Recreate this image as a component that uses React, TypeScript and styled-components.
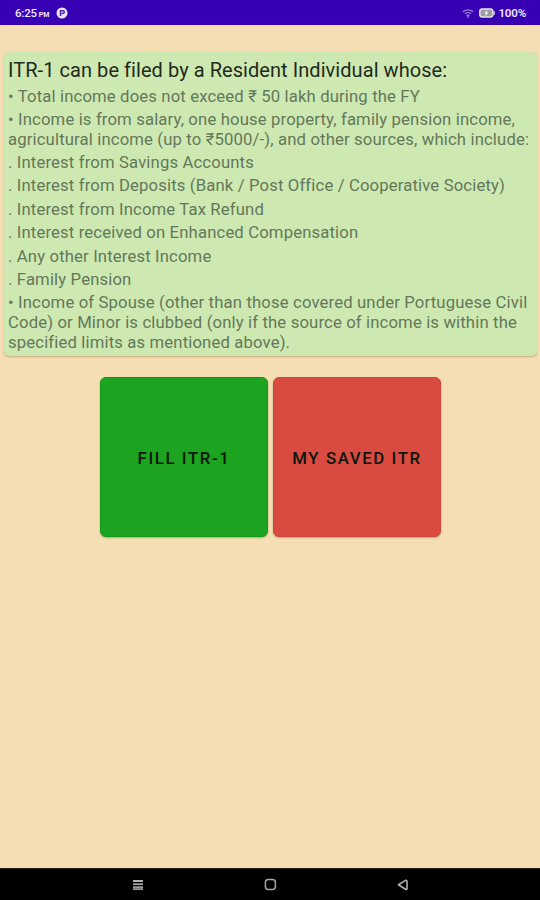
import React from "react";
import styled, { createGlobalStyle } from "styled-components";

const GlobalStyle = createGlobalStyle`
  * { box-sizing: border-box; }
  body { margin: 0; background: #f5deb3; font-family: Roboto, sans-serif; }
`;

const Screen = styled.div`
  width: 540px;
  height: 900px;
  display: flex;
  flex-direction: column;
  overflow: hidden;
  background: #f5deb3;
`;

const StatusBar = styled.header`
  height: 25px;
  flex: none;
  display: flex;
  align-items: center;
  justify-content: space-between;
  padding: 1px 14px 0 15px;
  background: #3800b3;
  color: #eee6fa;
`;

const StatusGroup = styled.div`
  display: flex;
  align-items: center;
`;

const Clock = styled.span`
  width: 41px;
  font-size: 11.5px;
  font-weight: 500;
  letter-spacing: -0.2px;
  white-space: nowrap;
  small { font-size: 7px; font-weight: 700; margin-left: 2px; }
`;

const BatteryLevel = styled.span`
  margin-left: 3px;
  font-size: 11.6px;
  font-weight: 600;
  letter-spacing: -0.2px;
`;

const Content = styled.main`
  flex: 1;
  display: flex;
  flex-direction: column;
  align-items: center;
  padding-top: 27px;
`;

const Card = styled.section`
  width: 533px;
  height: 304px;
  flex: none;
  padding: 6px 4px 0 4.5px;
  border-radius: 5px;
  background: #cee8b1;
  box-shadow: 0 1px 2px rgba(110, 80, 30, 0.35);
`;

const Title = styled.h1`
  margin: 0 0 4.5px;
  font-size: 20px;
  line-height: 24px;
  font-weight: 400;
  color: #1f2a1d;
  letter-spacing: 0.06px;
  white-space: nowrap;
`;

const Rule = styled.p`
  margin: 0 0 3.75px;
  font-size: 16.7px;
  line-height: 19.65px;
  letter-spacing: 0.14px;
  color: #63785a;
  white-space: nowrap;
`;

const Actions = styled.div`
  display: flex;
  gap: 5px;
  margin-top: 21px;
`;

const ActionButton = styled.button<{ $color: string; $edge: string }>`
  width: 168px;
  height: 160px;
  padding: 1px 0 0 1px;
  border: 1px solid ${(p) => p.$edge};
  border-radius: 6px;
  background: ${(p) => p.$color};
  box-shadow: 0 1px 2px rgba(90, 80, 40, 0.35);
  color: #0b160a;
  font: 500 16.8px Roboto, sans-serif;
  letter-spacing: 1.6px;
`;

const NavBar = styled.footer`
  height: 32px;
  flex: none;
  display: flex;
  align-items: center;
  justify-content: space-between;
  padding: 0 131px 0 132px;
  background: #000;
  border-top: 1px solid #28231b;
`;

const rules: string[][] = [
  ["• Total income does not exceed ₹ 50 lakh during the FY"],
  [
    "• Income is from salary, one house property, family pension income,",
    "agricultural income (up to ₹5000/-), and other sources, which include:",
  ],
  [". Interest from Savings Accounts"],
  [". Interest from Deposits (Bank / Post Office / Cooperative Society)"],
  [". Interest from Income Tax Refund"],
  [". Interest received on Enhanced Compensation"],
  [". Any other Interest Income"],
  [". Family Pension"],
  [
    "• Income of Spouse (other than those covered under Portuguese Civil",
    "Code) or Minor is clubbed (only if the source of income is within the",
    "specified limits as mentioned above).",
  ],
];

const NotificationIcon = () => (
  <svg width="12" height="12" viewBox="0 0 12 12">
    <circle cx="6" cy="6" r="5.5" fill="#eee6fa" />
    <path d="M4.5 9V3.8H7a1.3 1.3 0 0 1 0 2.6H5.6" fill="none" stroke="#4b20b0" strokeWidth="1.5" />
  </svg>
);

const Wifi = styled.svg`
  margin-right: 5px;
`;

const WifiIcon = () => (
  <Wifi width="12" height="11" viewBox="0 0 12 11" fill="none" stroke="#9c7ddd" strokeWidth="1.3">
    <path d="M1 3.6Q6 .2 11 3.6M2.8 5.8Q6 3.5 9.2 5.8M4.5 7.7Q6 6.8 7.5 7.7" />
    <path d="M6 7v3" />
  </Wifi>
);

const BatteryIcon = () => (
  <svg width="16" height="10" viewBox="0 0 16 10">
    <rect x="0.8" y="1" width="13" height="8" rx="2.4" fill="#9d9aa5" stroke="#e4e2df" strokeWidth="1.5" />
    <path d="M15.1 3.2v3.6" stroke="#e4e2df" strokeWidth="1.4" />
    <path d="M8 1.8 5.5 5.4h1.6L6.5 8.2l2.7-3.7H7.5z" fill="#fff" />
  </svg>
);

export default function App() {
  return (
    <>
      <GlobalStyle />
      <Screen>
        <StatusBar>
          <StatusGroup>
            <Clock>6:25<small>PM</small></Clock>
            <NotificationIcon />
          </StatusGroup>
          <StatusGroup>
            <WifiIcon />
            <BatteryIcon />
            <BatteryLevel>100%</BatteryLevel>
          </StatusGroup>
        </StatusBar>
        <Content>
          <Card>
            <Title>ITR-1 can be filed by a Resident Individual whose:</Title>
            {rules.map((lines) => (
              <Rule key={lines[0]}>
                {lines.map((line, i) => (
                  <React.Fragment key={line}>
                    {i > 0 && <br />}
                    {line}
                  </React.Fragment>
                ))}
              </Rule>
            ))}
          </Card>
          <Actions>
            <ActionButton $color="#1ca31f" $edge="#109914">FILL ITR-1</ActionButton>
            <ActionButton $color="#d94b40" $edge="#d1463c">MY SAVED ITR</ActionButton>
          </Actions>
        </Content>
        <NavBar>
          <svg width="12" height="12" viewBox="0 0 12 12" strokeWidth="1.7">
            <path d="M1 2h10" stroke="#d0d0d0" />
            <path d="M1 5.2h10" stroke="#a8a8a8" />
            <path d="M1 8.2h10M1 10.2h10" stroke="#989898" />
          </svg>
          <svg width="13" height="13" viewBox="0 0 13 13" fill="none" stroke="#a8a8a8" strokeWidth="1.5">
            <rect x="1.4" y="1.4" width="10" height="10" rx="3" />
          </svg>
          <svg width="12" height="12" viewBox="0 0 12 12" fill="none" stroke="#b0b0b0" strokeWidth="1.6" strokeLinejoin="round">
            <path d="M1.4 5.8 8.6 1.4Q10 1.1 10 2.6V9.2Q10 10.8 8.6 10.2Z" />
          </svg>
        </NavBar>
      </Screen>
    </>
  );
}
